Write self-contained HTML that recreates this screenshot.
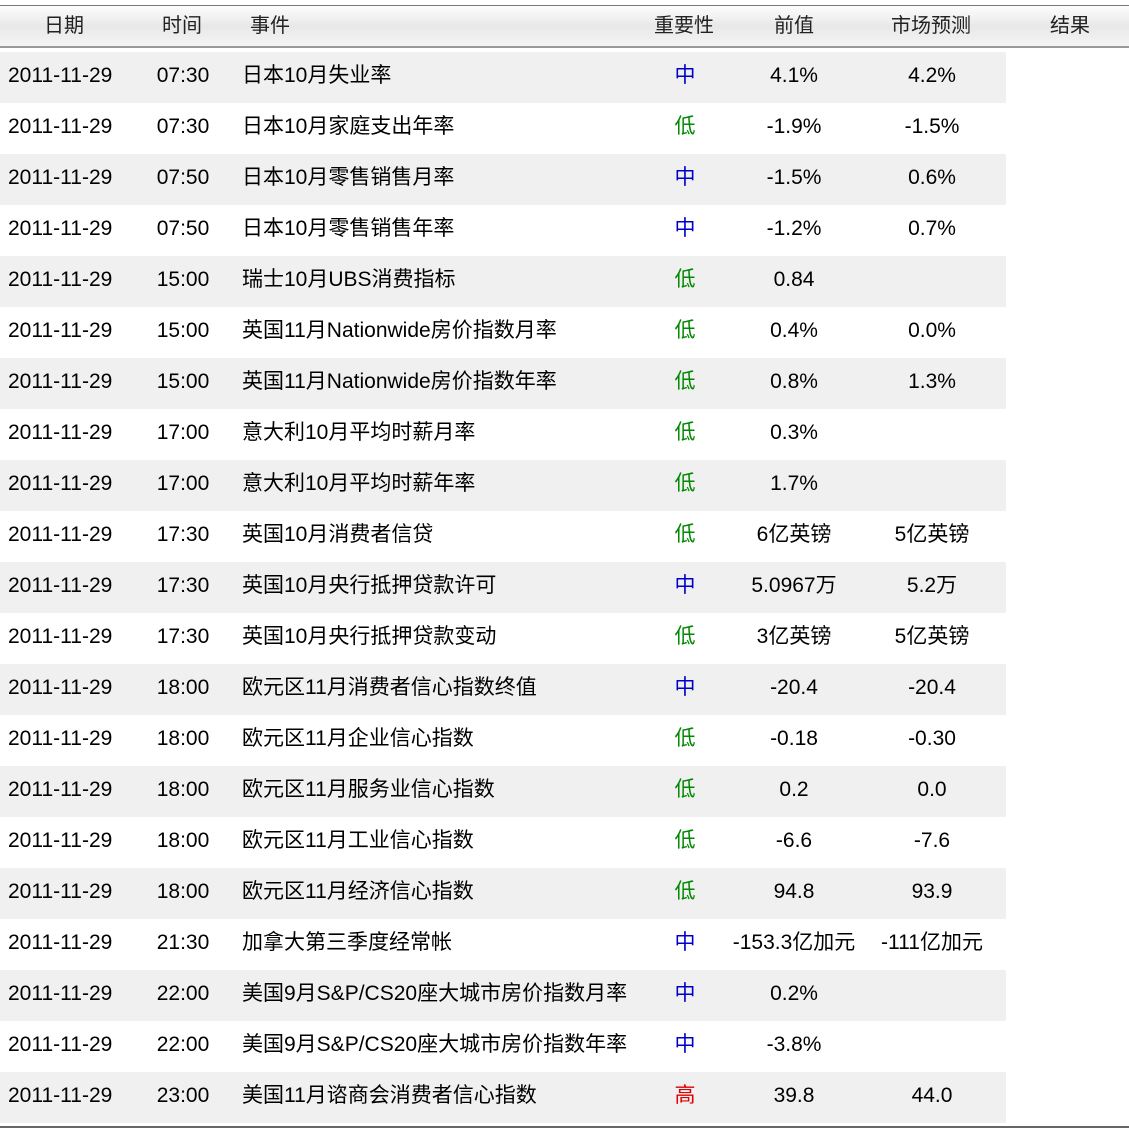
<!DOCTYPE html>
<html><head><meta charset="utf-8"><style>
*{margin:0;padding:0}
body{width:1129px;height:1133px;background:#fff;position:relative;overflow:hidden;font-family:"Liberation Sans","Noto Sans CJK SC",sans-serif;font-size:21px;color:#000}
.hd{position:absolute;left:0;top:5px;width:1129px;height:40px;border-top:1px solid #777;border-bottom:2px solid #999;background:linear-gradient(#fdfdfd,#e8e8e8 50%,#f4f4f4)}
.hd span{position:absolute;top:0;line-height:40px;font-size:20px;color:#222}
.r{position:absolute;left:0;width:1006px;height:51px}
.r.s{background:#f0f0f0}
.r span{position:absolute;top:-2px;line-height:51px;white-space:nowrap}
.c{transform:translateX(-50%)}
.m{color:#00c}.l{color:#080}.h{color:#d00}
.bt{position:absolute;left:0;top:1126px;width:1129px;height:2px;background:#666}
</style></head><body>
<div class="hd">
<span style="left:44px">日期</span><span style="left:162px">时间</span><span style="left:250px">事件</span><span style="left:654px">重要性</span><span style="left:774px">前值</span><span style="left:891px">市场预测</span><span style="left:1050px">结果</span>
</div>
<div id="t"></div>
<div class="bt"></div>
<script>
var d=[["07:30","日本10月失业率","中","4.1%","4.2%"],["07:30","日本10月家庭支出年率","低","-1.9%","-1.5%"],["07:50","日本10月零售销售月率","中","-1.5%","0.6%"],["07:50","日本10月零售销售年率","中","-1.2%","0.7%"],["15:00","瑞士10月UBS消费指标","低","0.84",""],["15:00","英国11月Nationwide房价指数月率","低","0.4%","0.0%"],["15:00","英国11月Nationwide房价指数年率","低","0.8%","1.3%"],["17:00","意大利10月平均时薪月率","低","0.3%",""],["17:00","意大利10月平均时薪年率","低","1.7%",""],["17:30","英国10月消费者信贷","低","6亿英镑","5亿英镑"],["17:30","英国10月央行抵押贷款许可","中","5.0967万","5.2万"],["17:30","英国10月央行抵押贷款变动","低","3亿英镑","5亿英镑"],["18:00","欧元区11月消费者信心指数终值","中","-20.4","-20.4"],["18:00","欧元区11月企业信心指数","低","-0.18","-0.30"],["18:00","欧元区11月服务业信心指数","低","0.2","0.0"],["18:00","欧元区11月工业信心指数","低","-6.6","-7.6"],["18:00","欧元区11月经济信心指数","低","94.8","93.9"],["21:30","加拿大第三季度经常帐","中","-153.3亿加元","-111亿加元"],["22:00","美国9月S&P/CS20座大城市房价指数月率","中","0.2%",""],["22:00","美国9月S&P/CS20座大城市房价指数年率","中","-3.8%",""],["23:00","美国11月谘商会消费者信心指数","高","39.8","44.0"]];
var h="";d.forEach(function(r,i){var cl=r[2]=="中"?"m":r[2]=="低"?"l":"h";
h+='<div class="r'+(i%2?'':' s')+'" style="top:'+(52+i*51)+'px"><span style="left:8px">2011-11-29</span><span class="c" style="left:183px">'+r[0]+'</span><span style="left:242px">'+r[1].replace("&","&amp;")+'</span><span class="c '+cl+'" style="left:685px">'+r[2]+'</span><span class="c" style="left:794px">'+r[3]+'</span><span class="c" style="left:932px">'+r[4]+'</span></div>';});
document.getElementById("t").innerHTML=h;
</script>
</body></html>
